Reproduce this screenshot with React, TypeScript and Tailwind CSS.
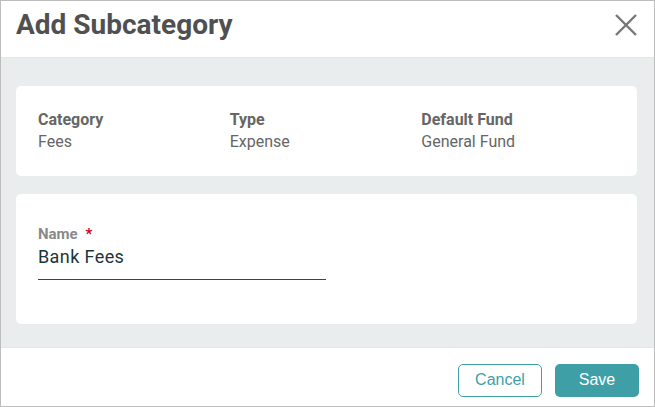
export default function App() {
  const details = [
    { label: 'Category', value: 'Fees' },
    { label: 'Type', value: 'Expense' },
    { label: 'Default Fund', value: 'General Fund' },
  ];

  return (
    <div className="w-[655px] h-[407px] border border-[#bdbdbd] bg-white flex flex-col font-['Roboto',sans-serif]">
      <div className="h-[57px] flex items-center justify-between pl-[15px] pr-[17px] border-b border-[#e3e6e6]">
        <h1 className="text-[28px] font-bold text-[#505050] leading-none -mt-[9px]">Add Subcategory</h1>
        <button className="w-[22px] h-[22px] -mt-[9px] text-[#777]">
          <svg viewBox="0 0 22 22" className="w-[22px] h-[22px]" fill="none" stroke="currentColor" strokeWidth={2.4}>
            <path d="M1 1L21 21M21 1L1 21" />
          </svg>
        </button>
      </div>

      <div className="flex-1 bg-[#e9eded] pl-[15px] pr-[17px] pt-[28px] flex flex-col gap-[18px]">
        <div className="bg-white rounded-[5px] h-[90px] pl-[22px] pr-[24px] pt-[23px] grid grid-cols-3">
          {details.map((d) => (
            <div key={d.label} className="text-[16px] leading-[22px] text-[#666]">
              <div className="font-bold">{d.label}</div>
              <div>{d.value}</div>
            </div>
          ))}
        </div>

        <div className="bg-white rounded-[5px] h-[130px] px-[22px] pt-[31px]">
          <div className="text-[15px] font-bold text-[#8a8a8a] leading-[18px]">
            Name <span className="text-[#d0021b] ml-[4px]">*</span>
          </div>
          <div className="w-[288px] border-b border-[#3e4444] pt-[3px] pb-[11px] text-[18px] leading-[22px] text-[#1d3538] tracking-[0.4px]">
            Bank Fees
          </div>
        </div>
      </div>

      <div className="h-[59px] flex items-center justify-end gap-[13px] pr-[15px] pt-[6px] border-t border-[#e3e6e6] font-['Liberation_Sans',sans-serif]">
        <button className="w-[84px] h-[33px] rounded-[5px] border border-[#3e9fa7] text-[#3e9fa7] text-[16px]">
          Cancel
        </button>
        <button className="w-[84px] h-[33px] rounded-[5px] bg-[#3e9fa7] text-white text-[16px]">
          Save
        </button>
      </div>
    </div>
  );
}
